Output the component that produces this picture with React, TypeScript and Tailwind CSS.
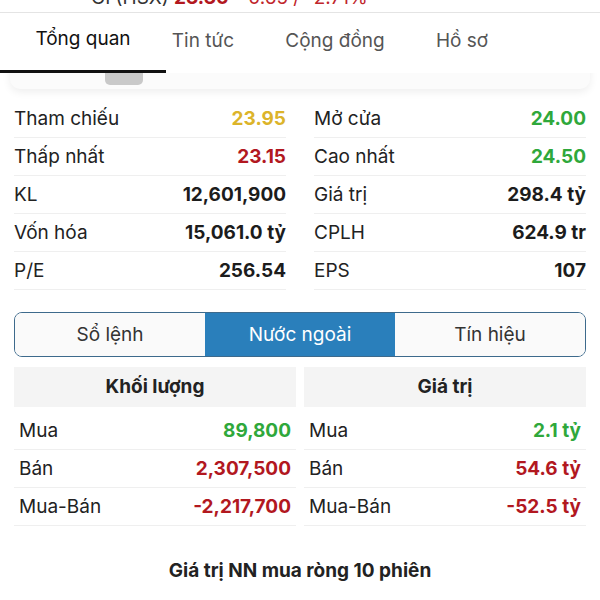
import React from "react";

const stats = [
  [
    { label: "Tham chiếu", value: "23.95", color: "text-[#dcb42a]" },
    { label: "Mở cửa", value: "24.00", color: "text-[#2fa83b]" },
  ],
  [
    { label: "Thấp nhất", value: "23.15", color: "text-[#b2181f]" },
    { label: "Cao nhất", value: "24.50", color: "text-[#2fa83b]" },
  ],
  [
    { label: "KL", value: "12,601,900", color: "text-[#1c1c1c]" },
    { label: "Giá trị", value: "298.4 tỷ", color: "text-[#1c1c1c]" },
  ],
  [
    { label: "Vốn hóa", value: "15,061.0 tỷ", color: "text-[#1c1c1c]" },
    { label: "CPLH", value: "624.9 tr", color: "text-[#1c1c1c]" },
  ],
  [
    { label: "P/E", value: "256.54", color: "text-[#1c1c1c]" },
    { label: "EPS", value: "107", color: "text-[#1c1c1c]" },
  ],
];

const foreign = [
  [
    { label: "Mua", value: "89,800", color: "text-[#2fa83b]" },
    { label: "Mua", value: "2.1 tỷ", color: "text-[#2fa83b]" },
  ],
  [
    { label: "Bán", value: "2,307,500", color: "text-[#b2181f]" },
    { label: "Bán", value: "54.6 tỷ", color: "text-[#b2181f]" },
  ],
  [
    { label: "Mua-Bán", value: "-2,217,700", color: "text-[#b2181f]" },
    { label: "Mua-Bán", value: "-52.5 tỷ", color: "text-[#b2181f]" },
  ],
];

function Row({ label, value, color, inset }: { label: string; value: string; color: string; inset?: boolean }) {
  return (
    <div
      className={
        "h-[38px] flex items-center justify-between border-b border-[#efefef] " + (inset ? "px-[5px]" : "")
      }
    >
      <span className="text-[#222]">{label}</span>
      <span className={"font-bold " + color}>{value}</span>
    </div>
  );
}

export default function App() {
  return (
    <div
      className="w-[600px] h-[600px] overflow-hidden bg-white text-[19px] leading-[24px] text-[#222]"
      style={{ fontFamily: "Inter, 'Noto Sans', sans-serif" }}
    >
      {/* header, scrolled under */}
      <div className="h-[13px] overflow-hidden border-b border-[#e4e4e4]">
        <div className="-mt-[14px] pl-[91px] text-[19px] leading-[24px] whitespace-nowrap">
          <span className="text-[#333]">GI (HSX) </span>
          <span className="font-bold text-[#b2181f]">23.30</span>
          <span className="text-[#c0262c]">&nbsp;&nbsp;-0.65 / -2.71%</span>
        </div>
      </div>

      {/* tabs */}
      <div className="relative z-10 h-[60px] flex bg-white">
        <div className="w-[166px] flex items-center justify-center pb-[5px] text-[#111] border-b-[3px] border-[#111]">
          Tổng quan
        </div>
        <div className="w-[74px] flex items-center justify-center pb-[5px] text-[#555]">Tin tức</div>
        <div className="w-[190px] flex items-center justify-center pb-[5px] text-[#555]">Cộng đồng</div>
        <div className="w-[64px] flex items-center justify-center pb-[5px] text-[#555]">Hồ sơ</div>
      </div>

      {/* partially hidden card */}
      <div className="relative h-[27px]">
        <div className="absolute left-[10px] right-[10px] -top-[20px] h-[36px] rounded-b-[10px] bg-[#fbfbfb] shadow-[0_3px_8px_rgba(0,0,0,0.07)]" />
        <div className="absolute left-[105px] top-0 w-[38px] h-[12px] rounded-b-[5px] bg-[#c9c9c9]" />
      </div>

      {/* stats */}
      <div className="grid grid-cols-2 gap-x-[28px] px-[14px]">
        {stats.map((pair, i) => (
          <React.Fragment key={i}>
            <Row {...pair[0]} />
            <Row {...pair[1]} />
          </React.Fragment>
        ))}
      </div>

      {/* segmented */}
      <div className="mx-[14px] mt-[22px] h-[45px] grid grid-cols-3 rounded-[8px] border border-[#3d6a8c] overflow-hidden">
        <div className="flex items-center justify-center bg-[#fafafa] text-[#333]">Sổ lệnh</div>
        <div className="flex items-center justify-center bg-[#2a7fbb] text-white">Nước ngoài</div>
        <div className="flex items-center justify-center bg-[#fafafa] text-[#333]">Tín hiệu</div>
      </div>

      {/* foreign table */}
      <div className="mt-[10px] grid grid-cols-2 gap-x-[8px] px-[14px]">
        <div className="h-[40px] flex items-center justify-center bg-[#f4f4f4] font-bold text-[#222]">Khối lượng</div>
        <div className="h-[40px] flex items-center justify-center bg-[#f4f4f4] font-bold text-[#222]">Giá trị</div>
        <div className="col-span-2 h-[5px]" />
        {foreign.map((pair, i) => (
          <React.Fragment key={i}>
            <Row {...pair[0]} inset />
            <Row {...pair[1]} inset />
          </React.Fragment>
        ))}
      </div>

      <div className="mt-[33px] text-center font-bold text-[#222]">Giá trị NN mua ròng 10 phiên</div>
    </div>
  );
}
